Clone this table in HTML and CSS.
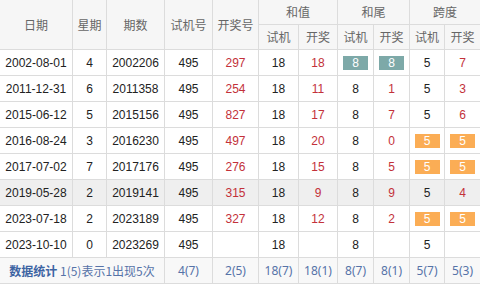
FILE: index.html
```html
<!DOCTYPE html>
<html>
<head>
<meta charset="utf-8">
<link rel="stylesheet" href="styles.css">
</head>
<body>
<table class="stat">
  <colgroup>
    <col class="w-date"><col class="w-week"><col class="w-issue"><col class="w-sj"><col class="w-kj">
    <col class="w-a"><col class="w-b"><col class="w-c"><col class="w-d"><col class="w-e"><col class="w-f">
  </colgroup>
  <thead>
    <tr class="h1">
      <th rowspan="2">日期</th>
      <th rowspan="2">星期</th>
      <th rowspan="2">期数</th>
      <th rowspan="2">试机号</th>
      <th rowspan="2">开奖号</th>
      <th colspan="2">和值</th>
      <th colspan="2">和尾</th>
      <th colspan="2">跨度</th>
    </tr>
    <tr class="h2">
      <th>试机</th><th>开奖</th><th>试机</th><th>开奖</th><th>试机</th><th>开奖</th>
    </tr>
  </thead>
  <tbody>
    <tr>
      <td>2002-08-01</td><td>4</td><td>2002206</td><td>495</td><td class="red">297</td>
      <td>18</td><td class="red">18</td><td><span class="badge teal">8</span></td><td><span class="badge teal">8</span></td><td>5</td><td class="red">7</td>
    </tr>
    <tr>
      <td>2011-12-31</td><td>6</td><td>2011358</td><td>495</td><td class="red">254</td>
      <td>18</td><td class="red">11</td><td>8</td><td class="red">1</td><td>5</td><td class="red">3</td>
    </tr>
    <tr>
      <td>2015-06-12</td><td>5</td><td>2015156</td><td>495</td><td class="red">827</td>
      <td>18</td><td class="red">17</td><td>8</td><td class="red">7</td><td>5</td><td class="red">6</td>
    </tr>
    <tr>
      <td>2016-08-24</td><td>3</td><td>2016230</td><td>495</td><td class="red">497</td>
      <td>18</td><td class="red">20</td><td>8</td><td class="red">0</td><td><span class="badge orange">5</span></td><td><span class="badge orange">5</span></td>
    </tr>
    <tr>
      <td>2017-07-02</td><td>7</td><td>2017176</td><td>495</td><td class="red">276</td>
      <td>18</td><td class="red">15</td><td>8</td><td class="red">5</td><td><span class="badge orange">5</span></td><td><span class="badge orange">5</span></td>
    </tr>
    <tr class="hl">
      <td>2019-05-28</td><td>2</td><td>2019141</td><td>495</td><td class="red">315</td>
      <td>18</td><td class="red">9</td><td>8</td><td class="red">9</td><td>5</td><td class="red">4</td>
    </tr>
    <tr>
      <td>2023-07-18</td><td>2</td><td>2023189</td><td>495</td><td class="red">327</td>
      <td>18</td><td class="red">12</td><td>8</td><td class="red">2</td><td><span class="badge orange">5</span></td><td><span class="badge orange">5</span></td>
    </tr>
    <tr>
      <td>2023-10-10</td><td>0</td><td>2023269</td><td>495</td><td></td>
      <td>18</td><td></td><td>8</td><td></td><td>5</td><td></td>
    </tr>
    <tr class="foot">
      <td colspan="3"><b>数据统计</b> 1(5)表示1出现5次</td>
      <td>4(7)</td><td>2(5)</td><td>18(7)</td><td>18(1)</td><td>8(7)</td><td>8(1)</td><td>5(7)</td><td>5(3)</td>
    </tr>
  </tbody>
</table>
</body>
</html>
```
FILE: styles.css
```css
html, body {
  margin: 0;
  padding: 0;
  background: #fff;
}
.stat {
  border-collapse: separate;
  border-spacing: 0;
  table-layout: fixed;
  width: 480px;
  font-family: "Liberation Sans", "Noto Sans CJK SC", sans-serif;
  font-size: 12px;
  color: #222;
}
.w-date { width: 73px; }
.w-week { width: 34px; }
.w-issue { width: 58px; }
.w-sj { width: 48px; }
.w-kj { width: 46px; }
.w-a { width: 40px; }
.w-b { width: 39px; }
.w-c { width: 36px; }
.w-d { width: 36px; }
.w-e { width: 35px; }
.w-f { width: 35px; }
.stat th, .stat td {
  border-right: 1px solid #dcdcdc;
  border-bottom: 1px solid #dcdcdc;
  text-align: center;
  padding: 0;
  white-space: nowrap;
  overflow: hidden;
}
.stat th {
  background: #f6f6f6;
  font-weight: normal;
  color: #666;
  font-family: "Noto Sans CJK SC", sans-serif;
  font-size: 12px;
  height: 24px;
  line-height: 16px;
}
.stat td {
  height: 25px;
}
.stat tr > :last-child { border-right: none; }
.red { color: #c3313a; }
.hl td { background: #efefef; }
.badge {
  display: inline-block;
  width: 25px;
  height: 14px;
  line-height: 14px;
  color: #fff;
  vertical-align: middle;
}
.teal { background: #7da9a8; }
.orange { background: #fbad55; }
.foot td {
  background: #f8f8f8;
  color: #5673a8;
  font-family: "Noto Sans CJK SC", "Liberation Sans", sans-serif;
  height: 25px;
}
.foot td:nth-child(n+2) { font-family: "Noto Sans", "Liberation Sans", sans-serif; }
.foot b {
  color: #3d64a3;
  font-weight: bold;
}
```
